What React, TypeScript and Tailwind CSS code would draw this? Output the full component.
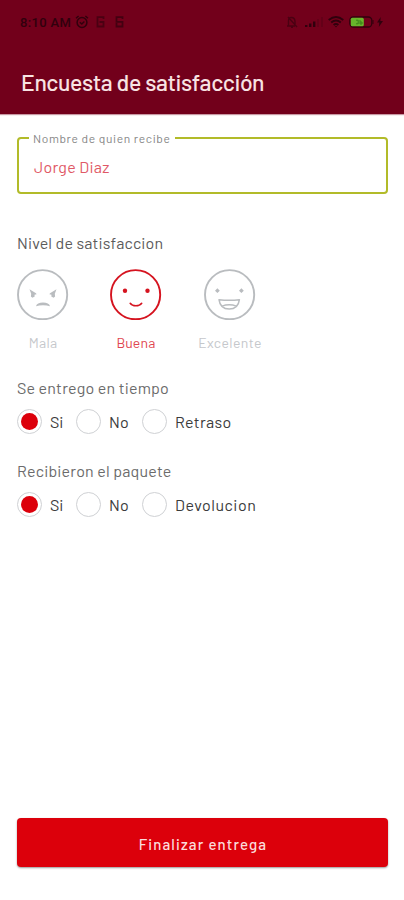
import React from "react";

type Mood = "mala" | "buena" | "excelente";

function StatusBar() {
  return (
    <div className="flex h-[44px] items-center justify-between pl-5 pr-[21px] text-[#30000d]">
      <div className="flex items-center">
        <span className="w-[55px] whitespace-nowrap pt-px font-['Roboto',sans-serif] text-[13px] font-medium leading-4 tracking-[0.35px]">8:10 AM</span>
        <svg className="h-[14px] w-[14px]" viewBox="0 0 14 14" fill="none" stroke="currentColor" strokeWidth="1.5">
          <circle cx="7" cy="7.5" r="4.9" />
          <path d="M1 3.2 3.6 1M13 3.2 10.4 1M4.8 7.2 6.8 9l2.6-2.5" />
        </svg>
        <svg className="ml-[7px] h-3 w-[9px] opacity-60" viewBox="0 0 9 12" fill="none" stroke="currentColor" strokeWidth="1.8">
          <path d="M7.5 3V1.2h-6v9.3h6V6H3.5" />
        </svg>
        <svg className="ml-[10px] h-3 w-[9px] opacity-70" viewBox="0 0 9 12" fill="none" stroke="currentColor" strokeWidth="1.8">
          <path d="M7.5 3V1.2h-6v4.6h6v4.7h-6V7" />
        </svg>
      </div>
      <div className="flex items-center">
        <svg className="mr-[2px] h-3 w-3 opacity-60" viewBox="0 0 12 12" fill="none" stroke="currentColor" strokeWidth="1.4">
          <path d="M1 10h8M2.5 10V5q0-3.5 3-3.5T9 5v5M2 1l9 10M5 11.3h2" />
        </svg>
        <svg className="ml-[5px] h-3 w-[18px]" viewBox="0 0 18 12" fill="currentColor">
          <path d="M0 9h2.4v2H0zM4 7.5h2.4V11H4zM8 5.5h2.4V11H8z" />
          <path d="M12 3h2v8h-2zM16 1h2v10h-2z" opacity=".22" />
        </svg>
        <svg className="ml-[5px] h-3 w-4" viewBox="0 0 16 12" fill="none" stroke="currentColor" strokeWidth="1.9">
          <path d="M.7 4Q8-2 15.3 4M3.2 6.6q4.8-4 9.6 0M5.6 9q2.4-2 4.8 0" />
          <path d="M6.8 10h2.4L8 11.5z" fill="currentColor" stroke="none" />
        </svg>
        <svg className="ml-[5px] h-3 w-[25px]" viewBox="0 0 25 12">
          <rect x=".8" y="1" width="22" height="10" rx="3.5" fill="none" stroke="currentColor" strokeWidth="1.3" />
          <rect x="1.8" y="1.8" width="13" height="8.4" rx="1.5" fill="#68b52b" />
          <path d="M7 4.2h2.2v3.6H7M11 4v4h2V6h-2" fill="none" stroke="#377d17" strokeWidth=".9" />
          <path d="M24 4v4" stroke="currentColor" />
        </svg>
        <svg className="ml-[3px] h-[10px] w-[6px]" viewBox="0 0 6 10" fill="currentColor">
          <path d="M3.7 0 0 5.6h2.3L1.8 10 6 4H3.4z" />
        </svg>
      </div>
    </div>
  );
}

function Face({ mood }: { mood: Mood }) {
  return (
    <svg className="h-[52px] w-[52px] shrink-0" viewBox="0 -0.7 52 52" fill="none" stroke="currentColor">
      <circle cx="25.6" cy="26" r="24.6" strokeWidth="1.9" />
      {mood === "mala" && (
        <g fill="currentColor" stroke="none">
          <path d="m12.5 20.5 6.5 4 .6 1-2.1.6.2 1.8-2.3 1.1-1.5-1.1.3-2.8z" />
          <path d="m39.5 20.5-6.5 4-.6 1 2.1.6-.2 1.8 2.3 1.1 1.5-1.1-.3-2.8z" />
          <path d="M19 37.6q1-3.7 7-3.7t7 3.7q-3-1-7-1t-7 1z" />
        </g>
      )}
      {mood === "buena" && (
        <g>
          <circle cx="15" cy="22" r="2.2" fill="currentColor" stroke="none" />
          <circle cx="37.5" cy="22" r="2.2" fill="currentColor" stroke="none" />
          <path d="M20.2 34.6q1.8 2.5 5.7 2.5t5.8-2.5" strokeWidth="1.6" strokeLinecap="round" />
        </g>
      )}
      {mood === "excelente" && (
        <g>
          <path d="M11 22.1 13.4 19.5l2.4 2.6-2.4 2.1zM35 22.1 37.4 19.5l2.4 2.6-2.4 2.1z" fill="currentColor" stroke="none" />
          <path d="M15 31q10.2 1.3 20.4 0-1.2 9.4-10.2 9.4T15 31zM18 37.4q7.2-2.6 14.4 0" strokeWidth="1.5" strokeLinejoin="round" />
        </g>
      )}
    </svg>
  );
}

function Radio({ label, checked, className, textClass }: { label: string; checked?: boolean; className: string; textClass: string }) {
  return (
    <label className={`flex shrink-0 items-center ${className}`}>
      <input type="radio" className="sr-only" checked={!!checked} readOnly />
      <span className="flex h-[25px] w-[25px] shrink-0 items-center justify-center rounded-full border border-[#cfd1d4]">
        {checked && <span className="h-[17px] w-[17px] rounded-full bg-[#dc000b]" />}
      </span>
      <span className={`ml-[8px] whitespace-nowrap pt-px text-[16px] leading-5 text-[#3b3b3b] ${textClass}`}>{label}</span>
    </label>
  );
}

export default function App() {
  return (
    <main className="flex h-[900px] w-full flex-col bg-white font-['Barlow','Roboto',sans-serif]">
      <header className="h-[114px] shrink-0 bg-[#72001b] shadow-[0_1px_1px_#72001b66]">
        <StatusBar />
        <h1 className="mt-[22px] pl-[21px] text-[23px] font-medium leading-8 tracking-[-0.36px] text-[#f8e3e3]">Encuesta de satisfacción</h1>
      </header>

      <div className="flex flex-1 flex-col pl-[17px] pr-4">
        <fieldset className="mt-[16px] h-[64px] rounded-[4px] border-2 border-[#b2bb29] pl-[10px]">
          <legend className="h-4 w-[146px] whitespace-nowrap pl-[4px] text-[12px] leading-4 tracking-[0.62px] text-[#858585]">Nombre de quien recibe</legend>
          <p className="mt-[11px] pl-[5px] text-[16px] leading-5 tracking-[0.25px] text-[#df5966]">Jorge Diaz</p>
        </fieldset>

        <h2 className="mt-[39px] text-[16px] leading-5 tracking-[0.15px] text-[#5b5b5b]">Nivel de satisfaccion</h2>
        <div className="mt-[15px] flex">
          <div className="flex w-[52px] flex-col items-center text-[#b9bcbf]">
            <Face mood="mala" />
            <span className="mt-[13px] text-[14px] leading-5 tracking-[0.3px] text-[#c5c7cb]">Mala</span>
          </div>
          <div className="ml-[41px] flex w-[52px] flex-col items-center text-[#d5131f]">
            <Face mood="buena" />
            <span className="mt-[13px] text-[14px] leading-5 tracking-[0.2px] text-[#df4650]">Buena</span>
          </div>
          <div className="ml-[36px] flex w-[64px] flex-col items-center text-[#b9bcbf]">
            <Face mood="excelente" />
            <span className="mt-[13px] text-[14px] leading-5 tracking-[0.4px] text-[#c5c7cb]">Excelente</span>
          </div>
        </div>

        <h2 className="mt-[25px] text-[16px] leading-5 tracking-[0.18px] text-[#6b6b6b]">Se entrego en tiempo</h2>
        <div className="mt-[10.5px] flex">
          <Radio label="Si" checked className="w-[59px]" textClass="" />
          <Radio label="No" className="w-[66px]" textClass="tracking-[0.3px]" />
          <Radio label="Retraso" className="" textClass="tracking-[0.3px]" />
        </div>

        <h2 className="mt-[27.5px] text-[16px] leading-5 tracking-[0.18px] text-[#6b6b6b]">Recibieron el paquete</h2>
        <div className="mt-[10.5px] flex">
          <Radio label="Si" checked className="w-[59px]" textClass="" />
          <Radio label="No" className="w-[66px]" textClass="tracking-[0.3px]" />
          <Radio label="Devolucion" className="" textClass="tracking-[0.5px]" />
        </div>

        <button className="mb-[33px] mt-auto flex h-[49px] w-full items-center justify-center rounded-[4px] bg-[#dc000b] pl-px pt-[2px] text-[15px] font-medium leading-5 tracking-[1.1px] text-[#fbdcdc] shadow-[0_1px_2px_#00000066]">
          Finalizar entrega
        </button>
      </div>
    </main>
  );
}
